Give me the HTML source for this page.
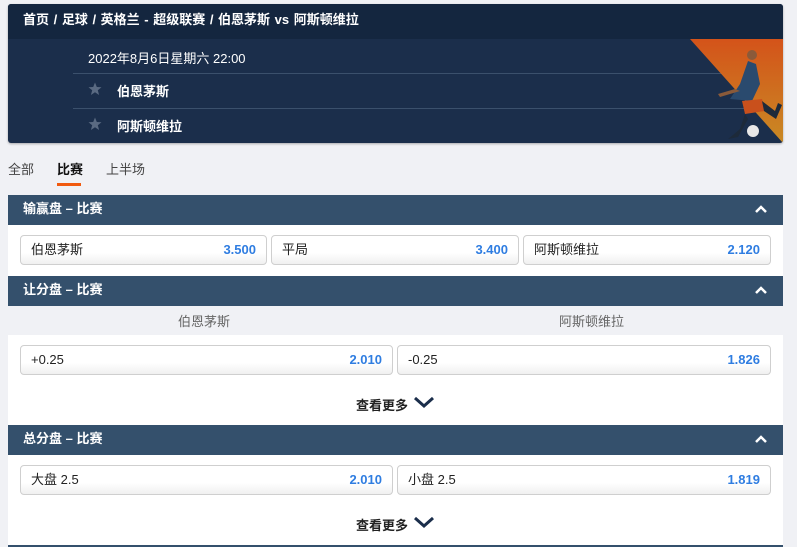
<!DOCTYPE html>
<html><head><meta charset="utf-8"><style>
*{margin:0;padding:0;box-sizing:border-box}
body{width:797px;height:547px;overflow:hidden;background:#f0f1f5;font-family:"Liberation Sans","Noto Sans CJK SC",sans-serif;font-size:13px;color:#222;position:relative}
.abs{position:absolute}
.card{left:8px;top:4px;width:775px;height:139px;background:#1b2e4b;border-radius:3px;overflow:hidden;box-shadow:0 1px 2px rgba(0,0,0,.3)}
.bc{left:0;top:0;width:775px;height:35px;background:#14263f;color:#fff;font-weight:bold;font-size:13px;line-height:32px;padding-left:15px;word-spacing:1px}
.line{height:1px;background:#3b506c}
.hd{left:8px;width:775px;height:30px;background:#34506c;color:#fff;font-weight:bold;font-size:13px;line-height:28px;padding-left:15px}
.hd .car{position:absolute;right:16px;top:10px}
.wh{left:8px;width:775px;background:#fff}
.btn{position:absolute;height:30px;border:1px solid #cfcfcf;border-radius:4px;background:linear-gradient(#fff 60%,#f0f0f0);line-height:27px;padding:0 10px;font-size:13px;color:#222}
.btn b{position:absolute;right:10px;top:0;color:#2f7de1;font-weight:bold}
.more{font-weight:bold;font-size:13px;color:#222}
</style></head><body>
<div class="abs card">
 <div class="abs bc">首页 / 足球 / 英格兰 - 超级联赛 / 伯恩茅斯 vs 阿斯顿维拉</div>
 <div class="abs" style="left:80px;top:44px;color:#fff;font-size:13px">2022年8月6日星期六 22:00</div>
 <div class="abs line" style="left:65px;top:69px;width:710px"></div>
 <div class="abs line" style="left:65px;top:104px;width:710px"></div>
 <svg class="abs" style="left:80px;top:78px" width="14" height="14"><polygon points="7,0.5 8.8,5 13.5,5.2 9.8,8.2 11.1,13 7,10.3 2.9,13 4.2,8.2 0.5,5.2 5.2,5" fill="#5a6a82"/></svg>
 <div class="abs" style="left:109px;top:77px;color:#fff;font-weight:bold">伯恩茅斯</div>
 <svg class="abs" style="left:80px;top:113px" width="14" height="14"><polygon points="7,0.5 8.8,5 13.5,5.2 9.8,8.2 11.1,13 7,10.3 2.9,13 4.2,8.2 0.5,5.2 5.2,5" fill="#5a6a82"/></svg>
 <div class="abs" style="left:109px;top:112px;color:#fff;font-weight:bold">阿斯顿维拉</div>
 <svg class="abs" style="left:682px;top:35px" width="93" height="104">
  <defs><linearGradient id="g" x1="0" y1="0" x2="0" y2="1"><stop offset="0" stop-color="#d4531a"/><stop offset="1" stop-color="#c98a24"/></linearGradient></defs>
  <polygon points="0,0 93,0 93,104" fill="url(#g)"/>
  <path d="M40,60 L50,45 L58,22 L66,25 L70,45 L62,62 Z" fill="#2a4a6e"/>
  <path d="M28,55 L45,50 L50,52 L30,58 Z" fill="#8a5a3a"/>
  <path d="M52,62 L72,60 L75,72 L55,75 Z" fill="#c9501c"/>
  <path d="M72,62 L85,72 L88,64 L92,66 L86,80 L74,72 Z" fill="#1d2a3a"/>
  <path d="M55,75 L50,90 L43,96 L38,100 L48,98 L58,80 Z" fill="#1d2a3a"/>
  <circle cx="62" cy="16" r="5" fill="#8a5a3a"/>
  <circle cx="63" cy="92" r="6" fill="#e8e8e8"/>
 </svg>
</div>
<div class="abs" style="left:8px;top:159px;color:#444">全部</div>
<div class="abs" style="left:57px;top:159px;color:#111;font-weight:bold">比赛</div>
<div class="abs" style="left:106px;top:159px;color:#444">上半场</div>
<div class="abs" style="left:57px;top:183px;width:24px;height:3px;background:#f15a0f"></div>

<div class="abs hd" style="top:195px">输赢盘 – 比赛<svg class="car" width="12" height="9"><path d="M1,7 L6,2 L11,7" stroke="#fff" stroke-width="2.5" fill="none"/></svg></div>
<div class="abs wh" style="top:225px;height:51px">
 <div class="btn" style="left:12px;top:10px;width:247px">伯恩茅斯<b>3.500</b></div>
 <div class="btn" style="left:263px;top:10px;width:248px">平局<b>3.400</b></div>
 <div class="btn" style="left:515px;top:10px;width:248px">阿斯顿维拉<b>2.120</b></div>
</div>
<div class="abs hd" style="top:276px">让分盘 – 比赛<svg class="car" width="12" height="9"><path d="M1,7 L6,2 L11,7" stroke="#fff" stroke-width="2.5" fill="none"/></svg></div>
<div class="abs" style="left:178px;top:311px;color:#666">伯恩茅斯</div>
<div class="abs" style="left:559px;top:311px;color:#666">阿斯顿维拉</div>
<div class="abs wh" style="top:335px;height:90px">
 <div class="btn" style="left:12px;top:10px;width:373px">+0.25<b>2.010</b></div>
 <div class="btn" style="left:389px;top:10px;width:374px">-0.25<b>1.826</b></div>
 <div class="abs more" style="left:348px;top:60px">查看更多</div>
 <svg class="abs" style="left:405px;top:61px" width="22" height="14"><path d="M2,2 L11,10 L20,2" stroke="#1b2e4b" stroke-width="3" fill="none"/></svg>
</div>
<div class="abs hd" style="top:425px">总分盘 – 比赛<svg class="car" width="12" height="9"><path d="M1,7 L6,2 L11,7" stroke="#fff" stroke-width="2.5" fill="none"/></svg></div>
<div class="abs wh" style="top:455px;height:92px">
 <div class="btn" style="left:12px;top:10px;width:373px">大盘 2.5<b>2.010</b></div>
 <div class="btn" style="left:389px;top:10px;width:374px">小盘 2.5<b>1.819</b></div>
 <div class="abs more" style="left:348px;top:60px">查看更多</div>
 <svg class="abs" style="left:405px;top:61px" width="22" height="14"><path d="M2,2 L11,10 L20,2" stroke="#1b2e4b" stroke-width="3" fill="none"/></svg>
</div>
<div class="abs" style="left:8px;top:545px;width:775px;height:2px;background:#34506c"></div>
</body></html>
